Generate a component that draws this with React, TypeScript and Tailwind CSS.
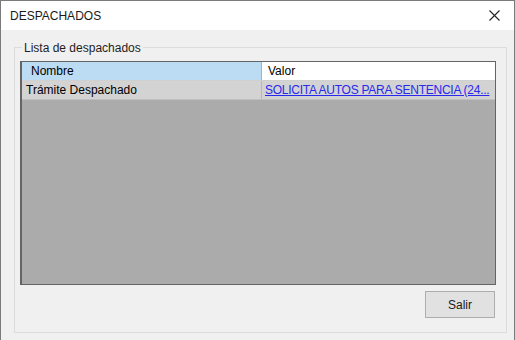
import React from 'react'

const font = { fontFamily: '"Liberation Sans", Arial, sans-serif' }

export default function App() {
  return (
    <div className="w-[515px] h-[340px] flex flex-col border-x border-t border-[#7a7a7a] bg-[#f0f0f0] text-[12px] text-black overflow-hidden" style={font}>
      {/* title bar */}
      <div className="h-[29px] bg-white flex items-center justify-between pl-[9px] pr-[12px] shrink-0">
        <span className="text-[12px] text-[#1a1a1a]">DESPACHADOS</span>
        <svg width="11" height="11" viewBox="0 0 11 11" className="mr-[2px]">
          <path d="M0.5 0.5 L10.5 10.5 M10.5 0.5 L0.5 10.5" stroke="#222" strokeWidth="1.1" />
        </svg>
      </div>

      {/* body */}
      <div className="flex-1 flex flex-col pt-[17px] pl-[13px] pr-[7px] pb-[7px]">
        <div className="relative flex-1 flex flex-col border border-[#dcdcdc] pt-[13px] pl-[5px] pr-[10px] pb-[14px]">
          <span className="absolute -top-[8px] left-[7px] bg-[#f0f0f0] px-[2px] leading-[16px] text-[#1e1e1e]">Lista de despachados</span>

          {/* grid */}
          <div className="flex-1 flex flex-col bg-[#ababab] border border-[#646464] border-l-[2px]">
            <div className="flex h-[19px] shrink-0 border-b border-[#d0d0d0]">
              <div className="w-[240px] bg-[#bcdcf4] border-r border-[#b0b0b0] flex items-center pl-[9px]">Nombre</div>
              <div className="flex-1 bg-white flex items-center pl-[6px]">Valor</div>
            </div>
            <div className="flex h-[19px] shrink-0 bg-[#d3d3d3] border-b border-[#c0c0c0]">
              <div className="w-[240px] border-r border-[#b8b8b8] flex items-center pl-[4px]">Trámite Despachado</div>
              <div className="flex-1 flex items-center pl-[3px] min-w-0">
                <span className="text-[#2828ee] underline whitespace-nowrap tracking-[-0.25px]">SOLICITA AUTOS PARA SENTENCIA (24...</span>
              </div>
            </div>
          </div>

          {/* buttons */}
          <div className="flex justify-end pt-[6px] shrink-0">
            <button className="w-[70px] h-[27px] mr-[1px] bg-[#e1e1e1] border border-[#adadad] text-[12px] text-[#1a1a1a]">Salir</button>
          </div>
        </div>
      </div>
    </div>
  )
}
